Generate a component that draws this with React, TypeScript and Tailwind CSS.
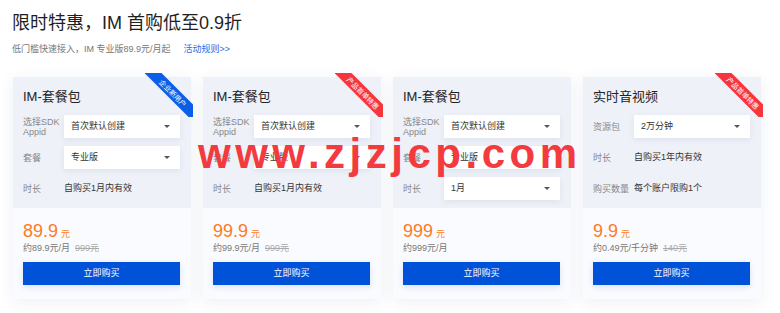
import React from "react";

type Row = { label: string[]; select?: string; text?: string };
type Card = {
  title: string;
  ribbon?: { text: string; red: boolean };
  rows: Row[];
  price: string;
  unit: string;
  orig?: string;
};

const cards: Card[] = [
  {
    title: "IM-套餐包",
    ribbon: { text: "企业新用户", red: false },
    rows: [
      { label: ["选择SDK", "Appid"], select: "首次默认创建" },
      { label: ["套餐"], select: "专业版" },
      { label: ["时长"], text: "自购买1月内有效" },
    ],
    price: "89.9",
    unit: "约89.9元/月",
    orig: "999元",
  },
  {
    title: "IM-套餐包",
    ribbon: { text: "产品首单特惠", red: true },
    rows: [
      { label: ["选择SDK", "Appid"], select: "首次默认创建" },
      { label: ["套餐"], select: "专业版" },
      { label: ["时长"], text: "自购买1月内有效" },
    ],
    price: "99.9",
    unit: "约99.9元/月",
    orig: "999元",
  },
  {
    title: "IM-套餐包",
    rows: [
      { label: ["选择SDK", "Appid"], select: "首次默认创建" },
      { label: ["套餐"], select: "专业版" },
      { label: ["时长"], select: "1月" },
    ],
    price: "999",
    unit: "约999元/月",
  },
  {
    title: "实时音视频",
    ribbon: { text: "产品首单特惠", red: true },
    rows: [
      { label: ["资源包"], select: "2万分钟" },
      { label: ["时长"], text: "自购买1年内有效" },
      { label: ["购买数量"], text: "每个账户限购1个" },
    ],
    price: "9.9",
    unit: "约0.49元/千分钟",
    orig: "140元",
  },
];

function Ribbon({ text, red }: { text: string; red: boolean }) {
  return (
    <div className="absolute top-[-4px] right-[-2px] w-[48px] h-[44px] overflow-hidden z-10 pointer-events-none">
      <div
        className={`absolute left-[-7px] top-[14px] w-[70px] h-[12px] rotate-45 flex items-center justify-center text-white text-[7px] leading-none ${
          red ? "bg-[#f5363f]" : "bg-[#0d5ee6]"
        }`}
      >
        {text}
      </div>
    </div>
  );
}

function Select({ value }: { value: string }) {
  return (
    <div className="flex-1 h-[23px] bg-white shadow-[0_2px_6px_rgba(30,50,90,0.08)] flex items-center justify-between pl-[7px] pr-[10px] text-[9px] text-[#333]">
      <span>{value}</span>
      <span className="w-0 h-0 border-l-[3px] border-r-[3px] border-t-[3px] border-l-transparent border-r-transparent border-t-[#555]" />
    </div>
  );
}

function PriceCard({ c }: { c: Card }) {
  return (
    <div className="relative flex flex-col shadow-[0_3px_14px_rgba(40,60,110,0.08)]">
      {c.ribbon && <Ribbon text={c.ribbon.text} red={c.ribbon.red} />}
      <div className="bg-[#eef1f8] pt-[10px] pb-[8px] pl-[10px] pr-[11px] flex flex-col">
        <div className="h-[20px] flex items-center text-[13px] text-[#222]">{c.title}</div>
        <div className="mt-[8px] flex flex-col gap-[8px]">
          {c.rows.map((r, i) => (
            <div key={i} className="h-[23px] flex items-center">
              <div className="w-[41px] shrink-0 text-[9px] leading-[10px] text-[#888]">
                {r.label.map((l, j) => (
                  <div key={j}>{l}</div>
                ))}
              </div>
              {r.select ? (
                <Select value={r.select} />
              ) : (
                <div className="text-[9px] text-[#333]">{r.text}</div>
              )}
            </div>
          ))}
        </div>
      </div>
      <div className="flex-1 bg-[#fafbfe] pt-[12px] pb-[14px] px-[10px] flex flex-col">
        <div className="h-[22px] flex items-end text-[#ff7a1f]">
          <span className="text-[18px] leading-[22px]">{c.price}</span>
          <span className="text-[9px] leading-[16px] ml-[3px]">元</span>
        </div>
        <div className="h-[13px] flex items-center text-[9px] text-[#777]">
          <span>{c.unit}</span>
          {c.orig && <span className="ml-[5px] line-through text-[#aaa]">{c.orig}</span>}
        </div>
        <button className="mt-[7px] mr-px h-[23px] bg-[#0052d9] text-white text-[9px] flex items-center justify-center shadow-[0_2px_6px_rgba(0,82,217,0.15)]">
          立即购买
        </button>
      </div>
    </div>
  );
}

export default function App() {
  return (
    <div className="relative w-[780px] h-[313px] bg-white overflow-hidden font-['Liberation_Sans','Noto_Sans_CJK_SC',sans-serif]">
      <div className="pl-[12px] pt-[12px]">
        <div className="h-[23px] flex items-center text-[18px] text-[#1f1f1f]">限时特惠，IM 首购低至0.9折</div>
        <div className="mt-[9px] h-[12px] flex items-center text-[9px]">
          <span className="text-[#777]">低门槛快速接入，IM 专业版89.9元/月起</span>
          <span className="ml-[13px] text-[#2d6ae3]">活动规则&gt;&gt;</span>
        </div>
      </div>
      <div className="mt-[21px] ml-[13px] w-[748px] grid grid-cols-4 gap-[12px]">
        {cards.map((c, i) => (
          <PriceCard key={i} c={c} />
        ))}
      </div>
      <div className="absolute left-[198px] top-[133px] text-[42px] leading-[42px] font-bold tracking-[4.5px] text-[#f23a3f] pointer-events-none z-20">
        www.zjzjcp.com
      </div>
    </div>
  );
}
